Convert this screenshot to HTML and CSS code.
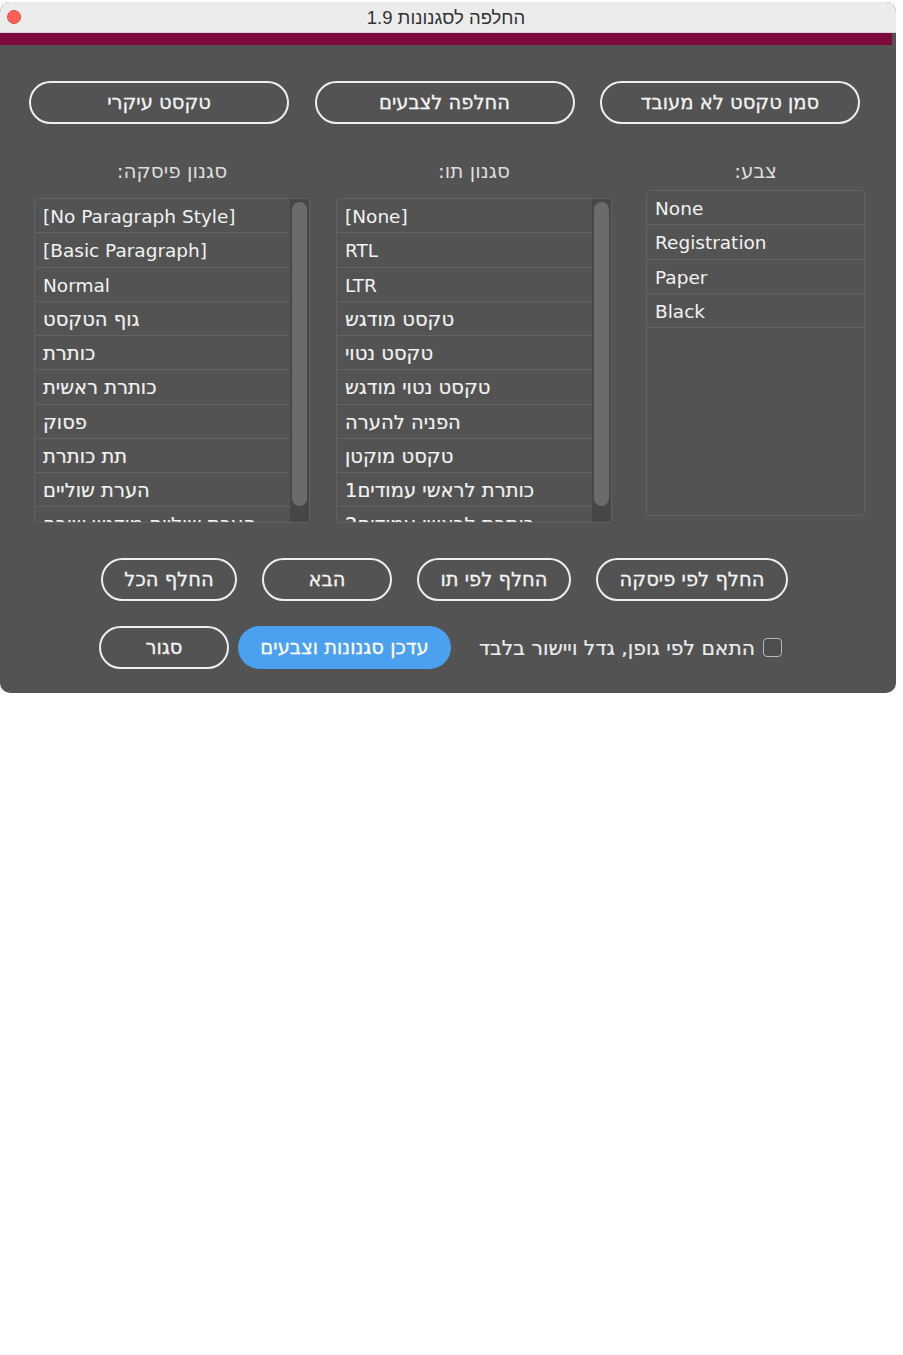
FILE: index.html
```html
<!DOCTYPE html>
<html lang="he">
<head>
<meta charset="utf-8">
<title>החלפה לסגנונות 1.9</title>
<link rel="stylesheet" href="styles.css">
</head>
<body>
<div class="window">
  <div class="titlebar">
    <div class="lights"><span class="dot-close"></span></div>
    <div class="title" dir="rtl">החלפה לסגנונות 1.9</div>
    <div></div>
  </div>
  <div class="band"></div>
  <div class="content">
    <div class="top-row">
      <button class="btn btn-top" dir="rtl">טקסט עיקרי</button>
      <button class="btn btn-top" dir="rtl">החלפה לצבעים</button>
      <button class="btn btn-top" dir="rtl">סמן טקסט לא מעובד</button>
    </div>

    <div class="columns">
      <div class="col col-para">
        <div class="col-label" dir="rtl">סגנון פיסקה:</div>
        <div class="list list-scroll">
          <div class="list-rows">
            <div class="row">[No Paragraph Style]</div>
            <div class="row">[Basic Paragraph]</div>
            <div class="row">Normal</div>
            <div class="row he">גוף הטקסט</div>
            <div class="row he">כותרת</div>
            <div class="row he">כותרת ראשית</div>
            <div class="row he">פסוק</div>
            <div class="row he">תת כותרת</div>
            <div class="row he">הערת שוליים</div>
            <div class="row he">הערת שוליים מודגש שורה</div>
          </div>
          <div class="scroll"><div class="thumb"></div></div>
        </div>
      </div>

      <div class="col col-char">
        <div class="col-label" dir="rtl">סגנון תו:</div>
        <div class="list list-scroll">
          <div class="list-rows">
            <div class="row">[None]</div>
            <div class="row">RTL</div>
            <div class="row">LTR</div>
            <div class="row he">טקסט מודגש</div>
            <div class="row he">טקסט נטוי</div>
            <div class="row he">טקסט נטוי מודגש</div>
            <div class="row he">הפניה להערה</div>
            <div class="row he">טקסט מוקטן</div>
            <div class="row he">כותרת לראשי עמודים1</div>
            <div class="row he">כותרת לראשי עמודים2</div>
          </div>
          <div class="scroll"><div class="thumb"></div></div>
        </div>
      </div>

      <div class="col col-color">
        <div class="col-label" dir="rtl">צבע:</div>
        <div class="list list-color">
          <div class="list-rows">
            <div class="row">None</div>
            <div class="row">Registration</div>
            <div class="row">Paper</div>
            <div class="row">Black</div>
          </div>
        </div>
      </div>
    </div>

    <div class="actions">
      <button class="btn w-all" dir="rtl">החלף הכל</button>
      <button class="btn w-next" dir="rtl">הבא</button>
      <button class="btn w-char" dir="rtl">החלף לפי תו</button>
      <button class="btn w-para" dir="rtl">החלף לפי פיסקה</button>
    </div>

    <div class="actions2">
      <button class="btn w-close" dir="rtl">סגור</button>
      <button class="btn btn-primary" dir="rtl">עדכן סגנונות וצבעים</button>
      <label class="check-group">
        <span class="check-text" dir="rtl">התאם לפי גופן, גדל ויישור בלבד</span>
        <span class="checkbox"></span>
      </label>
    </div>
  </div>
</div>
</body>
</html>
```

FILE: styles.css
```css
html, body {
  margin: 0;
  padding: 0;
  background: #ffffff;
}

body {
  font-family: "DejaVu Sans", "Liberation Sans", sans-serif;
}

.window {
  width: 896px;
  margin-top: 2px;
  background: #535353;
  border-radius: 10px;
  overflow: hidden;
}

.titlebar {
  height: 30px;
  background: #ececec;
  border-bottom: 1px solid #d4d4d4;
  display: grid;
  grid-template-columns: 1fr auto 1fr;
  align-items: center;
}

.lights {
  display: flex;
  align-items: center;
  padding-left: 7px;
}

.dot-close {
  width: 14px;
  height: 14px;
  border-radius: 50%;
  background: #fe5f57;
  border: 0.5px solid #e24b41;
  box-sizing: border-box;
}

.title {
  font-family: "Liberation Sans", "DejaVu Sans", sans-serif;
  font-size: 18.5px;
  color: #333333;
  margin-right: 4px;
  margin-top: 1px;
}

.band {
  height: 12px;
  background: #7c0a3c;
  margin-right: 4px;
}

.content {
  padding: 36px 0 24px 0;
}

.btn {
  box-sizing: border-box;
  height: 43px;
  border: 2px solid #eeeeee;
  border-radius: 22px;
  background: transparent;
  color: #f4f4f4;
  font-family: "DejaVu Sans", "Liberation Sans", sans-serif;
  font-size: 19.5px;
  -webkit-text-stroke: 0.3px currentColor;
  display: flex;
  align-items: center;
  justify-content: center;
  padding: 0;
  margin: 0;
}

.top-row {
  display: flex;
  gap: 25.5px;
  padding-left: 29px;
}

.btn-top {
  width: 260px;
}

.columns {
  display: flex;
  margin-top: 35px;
  padding-left: 34px;
}

.col-para,
.col-char {
  width: 276px;
}

.col-para {
  margin-right: 26px;
}

.col-char {
  margin-right: 34px;
}

.col-color {
  width: 219px;
}

.col-label {
  height: 24px;
  line-height: 24px;
  text-align: center;
  font-size: 20px;
  color: #dedede;
}

.list {
  box-sizing: border-box;
  border: 1px solid #616161;
  border-radius: 3px;
  display: flex;
  overflow: hidden;
}

.list-scroll {
  margin-top: 15px;
  height: 325px;
}

.list-color {
  margin-top: 7px;
  height: 326px;
}

.list-rows {
  flex: 1;
  min-width: 0;
}

.row {
  box-sizing: border-box;
  height: 34.25px;
  line-height: 36px;
  border-bottom: 1px solid #626262;
  padding-left: 8px;
  font-size: 18.5px;
  color: #f2f2f2;
  white-space: nowrap;
  overflow: hidden;
}

.row.he {
  font-size: 19.5px;
  -webkit-text-stroke: 0.2px currentColor;
}

.scroll {
  box-sizing: border-box;
  width: 19px;
  background: #474747;
  padding: 3px 2px 0 2px;
}

.thumb {
  height: 304px;
  border-radius: 8px;
  background: #6b6b6b;
}

.actions {
  display: flex;
  gap: 25px;
  padding-left: 101px;
  margin-top: 35px;
}

.w-all { width: 136px; }
.w-next { width: 130px; }
.w-char { width: 154px; }
.w-para { width: 192px; }

.actions2 {
  display: flex;
  align-items: center;
  padding-left: 99px;
  margin-top: 25px;
}

.w-close {
  width: 130px;
}

.btn-primary {
  width: 213px;
  margin-left: 9px;
  border: none;
  background: #4ba0ef;
  color: #ffffff;
}

.check-group {
  width: 331px;
  display: flex;
  align-items: center;
  justify-content: flex-end;
  gap: 8px;
}

.check-text {
  font-size: 20.3px;
  color: #ececec;
  -webkit-text-stroke: 0.2px currentColor;
}

.checkbox {
  box-sizing: border-box;
  width: 19px;
  height: 19px;
  border: 1.5px solid #b8b8b8;
  border-radius: 4px;
  background: #4e4e4e;
}
```
